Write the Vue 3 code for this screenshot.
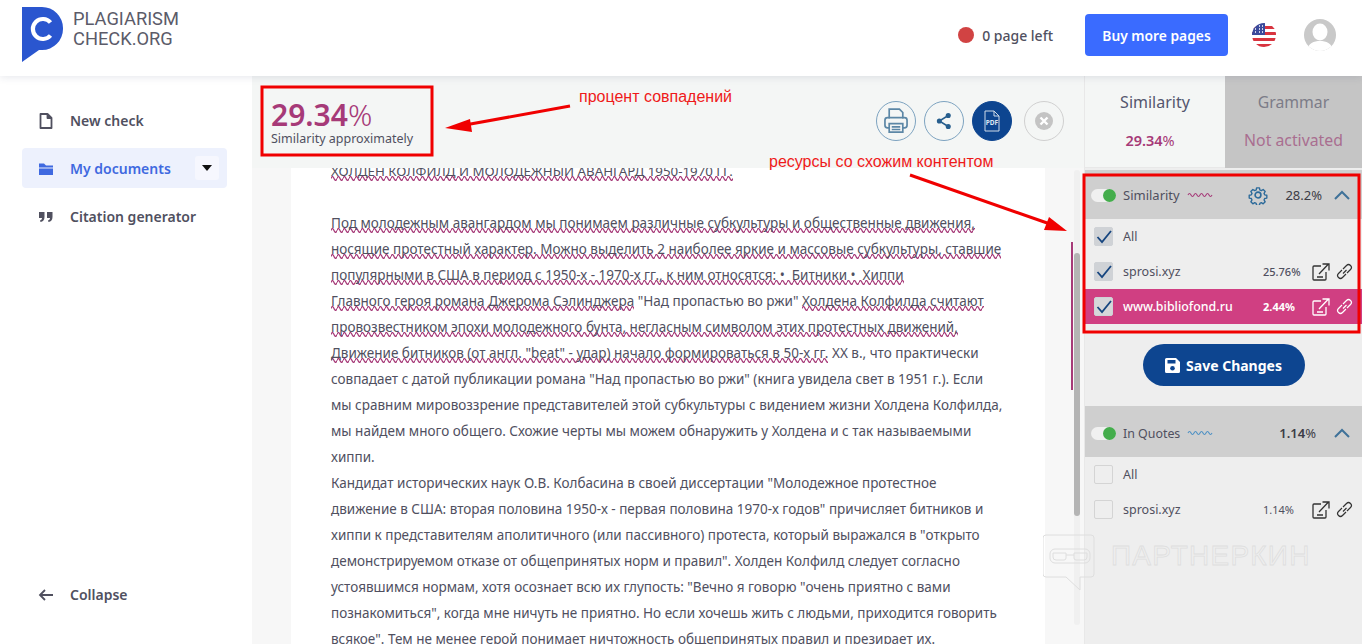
<script setup>
const W = (t) => ({ w: t })
const P = (t) => ({ t })
const lines = [
  [W('Под молодежным авангардом мы понимаем различные субкультуры и общественные движения,')],
  [W('носящие протестный характер. Можно выделить 2 наиболее яркие и массовые субкультуры, ставшие')],
  [W('популярными в США в период с 1950-х - 1970-х гг., к ним относятся: •  Битники •  Хиппи')],
  [W('Главного героя романа Джерома Сэлинджера'), P(' "Над пропастью во ржи" '), W('Холдена Колфилда считают')],
  [W('провозвестником эпохи молодежного бунта, негласным символом этих протестных движений,')],
  [W('Движение битников (от англ. "beat" - удар) начало формироваться в 50-х гг.'), P(' XX в., что практически')],
  [P('совпадает с датой публикации романа "Над пропастью во ржи" (книга увидела свет в 1951 г.). Если')],
  [P('мы сравним мировоззрение представителей этой субкультуры с видением жизни Холдена Колфилда,')],
  [P('мы найдем много общего. Схожие черты мы можем обнаружить у Холдена и с так называемыми')],
  [P('хиппи.')],
  [P('Кандидат исторических наук О.В. Колбасина в своей диссертации "Молодежное протестное')],
  [P('движение в США: вторая половина 1950-х - первая половина 1970-х годов" причисляет битников и')],
  [P('хиппи к представителям аполитичного (или пассивного) протеста, который выражался в "открыто')],
  [P('демонстрируемом отказе от общепринятых норм и правил". Холден Колфилд следует согласно')],
  [P('устоявшимся нормам, хотя осознает всю их глупость: "Вечно я говорю "очень приятно с вами')],
  [P('познакомиться", когда мне ничуть не приятно. Но если хочешь жить с людьми, приходится говорить')],
  [P('всякое". Тем не менее герой понимает ничтожность общепринятых правил и презирает их.')],
]
const nav = [
  { label: 'New check', icon: 'file' },
  { label: 'My documents', icon: 'folder', active: true },
  { label: 'Citation generator', icon: 'quote' },
]
const wave = 'M0 4q1.500-3 3 0t3 0 3 0 3 0 3 0 3 0 3 0 3 0'
</script>

<template>
  <div class="app">
    <header class="top">
      <div class="logo">
        <svg width="42" height="56" viewBox="0 0 42 56">
          <path d="M0 0h20a21 21 0 0 1 21 21v1a21 21 0 0 1-21 21h-3L0 55z" fill="#2a56cf" />
          <path d="M28.500 15.500a10 10 0 1 0 0 13" fill="none" stroke="#fff" stroke-width="4.200" />
        </svg>
        <div class="logo-text">PLAGIARISM<br />CHECK.ORG</div>
      </div>
      <div class="top-right">
        <span class="dot"></span>
        <span class="pages">0 page left</span>
        <button class="buy">Buy more pages</button>
        <svg class="flag" width="24" height="24" viewBox="0 0 24 24">
          <defs><clipPath id="fc"><circle cx="12" cy="12" r="12" /></clipPath></defs>
          <g clip-path="url(#fc)">
            <rect width="24" height="24" fill="#fff" />
            <rect y="3" width="24" height="3" fill="#d8343f" />
            <rect y="9" width="24" height="3" fill="#d8343f" />
            <rect y="15" width="24" height="3" fill="#d8343f" />
            <rect y="21" width="24" height="3" fill="#d8343f" />
            <rect width="13" height="12" fill="#3b4a9c" />
            <path d="M3 3h1M7 3h1M10 3h1M3 6h1M7 6h1M10 6h1M3 9h1M7 9h1M10 9h1" stroke="#fff" stroke-width="1.400" />
          </g>
        </svg>
        <svg class="avatar" width="32" height="32" viewBox="0 0 32 32">
          <defs><clipPath id="ac"><circle cx="16" cy="16" r="16" /></clipPath></defs>
          <g clip-path="url(#ac)">
            <rect width="32" height="32" fill="#c9c9c9" />
            <ellipse cx="16" cy="13" rx="7.500" ry="8.500" fill="#fff" />
            <path d="M3 32c1-8 7-10 13-10s12 2 13 10z" fill="#fff" />
          </g>
        </svg>
      </div>
    </header>

    <div class="body">
      <aside class="side">
        <nav class="nav">
          <a v-for="n in nav" :key="n.label" class="nav-item" :class="{ active: n.active }">
            <svg width="16" height="16" viewBox="0 0 16 16" class="nav-ico">
              <path v-if="n.icon === 'file'" d="M2.500 1h7l4 4v10h-11zM9.500 1v4h4" fill="none" stroke="currentColor" stroke-width="1.800" stroke-linejoin="round" />
              <path v-else-if="n.icon === 'folder'" d="M1 2.500h5l2 2h7v2H1zM1 7.500h14V14H1z" fill="currentColor" />
              <path v-else d="M1 3h5.500v5c0 3-1.500 4.500-4 5l-.5-1.500c1.500-.5 2-1.500 2-2.500H1zM9 3h5.500v5c0 3-1.500 4.500-4 5l-.5-1.500c1.500-.5 2-1.500 2-2.500H9z" fill="currentColor" />
            </svg>
            <span>{{ n.label }}</span>
            <span v-if="n.active" class="caret"><i></i></span>
          </a>
        </nav>
        <a class="nav-item collapse">
          <svg width="16" height="16" viewBox="0 0 16 16" class="nav-ico">
            <path d="M15 8H2M7 3 2 8l5 5" fill="none" stroke="currentColor" stroke-width="1.800" />
          </svg>
          <span>Collapse</span>
        </a>
      </aside>

      <main class="center">
        <div class="toolbar">
          <div class="score">
            <div class="num">29.34<span>%</span></div>
            <div class="cap">Similarity approximately</div>
          </div>
          <div class="tools">
            <span class="round">
              <svg width="30" height="32" viewBox="0 0 30 32" fill="none" stroke="#5c87a6" stroke-width="2">
                <path d="M7 13V2h12l4 4v7" />
                <rect x="2" y="12" width="26" height="12" rx="3" />
                <path d="M7 19h16v10H7z" fill="#f4f6f5" />
                <path d="M10 23h10M10 26h10" />
              </svg>
            </span>
            <span class="round">
              <svg width="18" height="20" viewBox="0 0 18 20" fill="#285f8e">
                <circle cx="14" cy="3.500" r="3" />
                <circle cx="3.500" cy="10" r="3" />
                <circle cx="14" cy="16.500" r="3" />
                <path d="M14 3.500 3.500 10 14 16.500" fill="none" stroke="#285f8e" stroke-width="1.800" />
              </svg>
            </span>
            <span class="round pdf">
              <svg width="16" height="22" viewBox="0 0 16 22" fill="none" stroke="#cfdbe8" stroke-width="1">
                <path d="M1 1h9l5 5v15H1zM10 1v5h5" />
                <text x="8" y="15" text-anchor="middle" class="pdf-t">PDF</text>
              </svg>
            </span>
            <span class="round off">
              <svg width="18" height="18" viewBox="0 0 18 18">
                <circle cx="9" cy="9" r="9" fill="#c4c4c4" />
                <path d="m5.500 5.500 7 7m0-7-7 7" stroke="#fff" stroke-width="2.400" />
              </svg>
            </span>
          </div>
        </div>
        <div class="doc-wrap">
          <article class="paper">
            <div class="doc">
              <p class="line title"><span class="w">ХОЛДЕН КОЛФИЛД И МОЛОДЕЖНЫЙ АВАНГАРД 1950-1970 ГГ.</span></p>
              <p class="line">&nbsp;</p>
              <p v-for="(l, i) in lines" :key="i" class="line">
                <template v-for="(s, j) in l" :key="j">
                  <span v-if="s.w" class="w">{{ s.w }}</span><span v-else>{{ s.t }}</span>
                </template>
              </p>
            </div>
          </article>
          <div class="track"><div class="thumb"></div></div>
          <div class="mark"></div>
        </div>
      </main>

      <aside class="panel">
        <div class="tabs">
          <div class="tab on">
            <div class="t1">Similarity</div>
            <div class="t2"><b>29.34</b>%</div>
          </div>
          <div class="tab off-tab">
            <div class="t1">Grammar</div>
            <div class="t3">Not activated</div>
          </div>
        </div>

        <section class="sec first">
          <div class="sec-head">
            <span class="toggle"><i></i></span>
            <span class="sec-name">Similarity</span>
            <svg class="wv" width="26" height="8" viewBox="0 0 24 8"><path :d="wave" fill="none" stroke="#a63a78" stroke-width="1.100" /></svg>
            <svg class="gear" width="20" height="20" viewBox="0 0 24 24" fill="none" stroke="#2c6a9a" stroke-width="1.900" stroke-linejoin="round">
              <circle cx="12" cy="12" r="3.500" />
              <path d="M10 2h4l.6 3 2 .9 2.600-1.600 2.800 2.800-1.600 2.600.9 2 3 .6v4l-3 .6-.9 2 1.600 2.600-2.800 2.800-2.600-1.600-2 .9-.6 3h-4l-.6-3-2-.9-2.600 1.600-2.800-2.800 1.600-2.600-.9-2-3-.6v-4l3-.6.9-2-1.600-2.600 2.800-2.800 2.600 1.600 2-.9z" transform="translate(1.700 1.700) scale(.86)" />
            </svg>
            <span class="sec-pct">28.2%</span>
            <svg class="chev" width="16" height="10" viewBox="0 0 16 10"><path d="M1 9 8 2l7 7" fill="none" stroke="#3f7299" stroke-width="2" /></svg>
          </div>
          <label class="row"><span class="cb on"><svg width="16" height="14" viewBox="0 0 16 14"><path d="m1.500 7 4.500 5 9-11" fill="none" stroke="#16457f" stroke-width="1.800" /></svg></span><span class="name">All</span></label>
          <label class="row"><span class="cb on"><svg width="16" height="14" viewBox="0 0 16 14"><path d="m1.500 7 4.500 5 9-11" fill="none" stroke="#16457f" stroke-width="1.800" /></svg></span><span class="name">sprosi.xyz</span><span class="pct">25.76%</span>
            <svg class="ext" width="18" height="18" viewBox="0 0 18 18" fill="none" stroke="currentColor" stroke-width="1.300"><path d="M9 3H2a1 1 0 0 0-1 1v12a1 1 0 0 0 1 1h11a1 1 0 0 0 1-1V9M7 11 16 1.500M10.500 1H17v6.500M5 14h6" /></svg>
            <svg class="lnk" width="17" height="17" viewBox="0 0 17 17" fill="none" stroke="currentColor" stroke-width="1.200"><path d="M7 10.500 10.500 7M6 7 2.500 10.500a2.800 2.800 0 0 0 4 4L10 11M11 10l3.500-3.500a2.800 2.800 0 0 0-4-4L7 6" /></svg>
          </label>
          <label class="row hot"><span class="cb on"><svg width="16" height="14" viewBox="0 0 16 14"><path d="m1.500 7 4.500 5 9-11" fill="none" stroke="#16457f" stroke-width="1.800" /></svg></span><span class="name">www.bibliofond.ru</span><span class="pct">2.44%</span>
            <svg class="ext" width="18" height="18" viewBox="0 0 18 18" fill="none" stroke="currentColor" stroke-width="1.300"><path d="M9 3H2a1 1 0 0 0-1 1v12a1 1 0 0 0 1 1h11a1 1 0 0 0 1-1V9M7 11 16 1.500M10.500 1H17v6.500M5 14h6" /></svg>
            <svg class="lnk" width="17" height="17" viewBox="0 0 17 17" fill="none" stroke="currentColor" stroke-width="1.200"><path d="M7 10.500 10.500 7M6 7 2.500 10.500a2.800 2.800 0 0 0 4 4L10 11M11 10l3.500-3.500a2.800 2.800 0 0 0-4-4L7 6" /></svg>
          </label>
          <div class="save-wrap">
            <button class="save">
              <svg width="15" height="15" viewBox="0 0 15 15"><path d="M1.500 0H11l4 4v9.500a1.500 1.500 0 0 1-1.500 1.500h-12A1.500 1.500 0 0 1 0 13.500v-12A1.500 1.500 0 0 1 1.500 0z" fill="#fff" /><rect x="2.500" y="2" width="8" height="3.500" fill="#0d4590" /><circle cx="7.500" cy="10.300" r="2.300" fill="#0d4590" /></svg>
              Save Changes
            </button>
          </div>
        </section>

        <section class="sec">
          <div class="sec-head q">
            <span class="toggle"><i></i></span>
            <span class="sec-name">In Quotes</span>
            <svg class="wv" width="26" height="8" viewBox="0 0 24 8"><path :d="wave" fill="none" stroke="#4d90c4" stroke-width="1.100" /></svg>
            <span class="sec-pct solo"><b>1.14</b>%</span>
            <svg class="chev" width="16" height="10" viewBox="0 0 16 10"><path d="M1 9 8 2l7 7" fill="none" stroke="#3f7299" stroke-width="2" /></svg>
          </div>
          <label class="row"><span class="cb"></span><span class="name">All</span></label>
          <label class="row"><span class="cb"></span><span class="name">sprosi.xyz</span><span class="pct q2">1.14%</span>
            <svg class="ext" width="18" height="18" viewBox="0 0 18 18" fill="none" stroke="currentColor" stroke-width="1.300"><path d="M9 3H2a1 1 0 0 0-1 1v12a1 1 0 0 0 1 1h11a1 1 0 0 0 1-1V9M7 11 16 1.500M10.500 1H17v6.500M5 14h6" /></svg>
            <svg class="lnk" width="17" height="17" viewBox="0 0 17 17" fill="none" stroke="currentColor" stroke-width="1.200"><path d="M7 10.500 10.500 7M6 7 2.500 10.500a2.800 2.800 0 0 0 4 4L10 11M11 10l3.500-3.500a2.800 2.800 0 0 0-4-4L7 6" /></svg>
          </label>
        </section>
      </aside>
    </div>

    <!-- annotations drawn on top of the screenshot -->
    <svg class="notes" width="1362" height="644" viewBox="0 0 1362 644" fill="none">
      <rect x="262" y="87" width="170" height="68" stroke="#f00000" stroke-width="3" />
      <rect x="1084" y="175" width="275" height="157" stroke="#f00000" stroke-width="3" />
      <path d="M570 106 465 125" stroke="#f00000" stroke-width="3" />
      <path d="m445 128 25-9 2 13z" fill="#f00000" />
      <path d="M910 175 1050 224" stroke="#f00000" stroke-width="3" />
      <path d="m1067 231-23-1 5-13z" fill="#f00000" />
    </svg>
    <div class="note n1">процент совпадений</div>
    <div class="note n2">ресурсы со схожим контентом</div>

    <div class="wm">
      <svg width="54" height="60" viewBox="0 0 54 60" fill="none" stroke="#dedede" stroke-width="1">
        <path d="M3 1h45a3 3 0 0 1 3 3v36a3 3 0 0 1-3 3H37v13L23 43H3a3 3 0 0 1-3-3V4a3 3 0 0 1 3-3z" />
        <rect x="7" y="15" width="40" height="14" rx="5" />
        <path d="M10 19h13v5a2 2 0 0 1-2 2H13a3 3 0 0 1-3-3zM31 19h13v4a3 3 0 0 1-3 3h-8a2 2 0 0 1-2-2zM23 21h8" />
      </svg>
      <span>ПАРТНЕРКИН</span>
    </div>
  </div>
</template>

<style>
html, body { margin: 0; overflow: hidden; background: #fff; }
</style>

<style scoped>
.app {
  position: relative;
  width: 1362px;
  height: 644px;
  overflow: hidden;
  font-family: "Noto Sans", "Open Sans", sans-serif;
  color: #50505f;
}
.top {
  position: relative;
  z-index: 2;
  height: 76px;
  background: #fff;
  box-shadow: 0 1px 8px rgba(40, 50, 90, .12);
  display: flex;
  align-items: flex-start;
  justify-content: space-between;
  padding-left: 22px;
  padding-right: 26px;
  box-sizing: border-box;
}
.logo { display: flex; gap: 9px; padding-top: 7px; }
.logo-text {
  font-family: Roboto, sans-serif;
  font-size: 18.300px;
  line-height: 20px;
  color: #5b5b69;
  padding-top: 2px;
}
.top-right { display: flex; align-items: center; height: 70px; }
.dot { width: 16px; height: 16px; border-radius: 50%; background: #d14343; margin-right: 8px; }
.pages { font-size: 14px; font-weight: 500; color: #50505f; margin-right: 32px; }
.buy {
  width: 143px;
  height: 42px;
  border: 0;
  border-radius: 4px;
  background: #3a6bff;
  color: #fff;
  font: 600 13.800px "Noto Sans", sans-serif;
  margin-right: 24px;
}
.flag { margin-right: 28px; }
.body { display: grid; grid-template-columns: 252px 1fr 277px; height: 568px; }
.side {
  display: flex;
  flex-direction: column;
  justify-content: space-between;
  padding: 24px 25px 38px 22px;
}
.nav { display: flex; flex-direction: column; gap: 8px; }
.nav-item {
  display: flex;
  align-items: center;
  height: 40px;
  box-sizing: border-box;
  padding-left: 16px;
  padding-top: 1px;
  border-radius: 4px;
  font-size: 14px;
  font-weight: 600;
  color: #50505f;
}
.nav-ico { margin-right: 16px; flex: none; }
.nav-item.active { background: #edf1fd; color: #3f69e0; }
.caret {
  margin-left: auto;
  margin-right: 8px;
  margin-top: -1px;
  width: 24px;
  height: 24px;
  background: #f6f7fe;
  border-radius: 3px;
  display: flex;
  align-items: center;
  justify-content: center;
}
.caret i { border: 5px solid transparent; border-top: 6px solid #111; border-bottom: 0; }
.center { display: flex; flex-direction: column; min-width: 0; border-right: 1px solid #e8e8e8; }
.toolbar {
  height: 92px;
  flex: none;
  background: #f4f6f5;
  display: flex;
  justify-content: space-between;
  padding: 0 20px 0 19px;
  position: relative;
  z-index: 1;
}
.score { padding-top: 23px; }
.num { font-size: 30px; line-height: 32px; font-weight: 600; color: #a63a78; }
.num span { font-weight: 300; }
.cap { font-size: 12.500px; line-height: 16px; color: #50505f; }
.tools { display: flex; gap: 8px; padding-top: 25px; }
.round {
  width: 38px;
  height: 38px;
  border: 1px solid #7da3c0;
  border-radius: 50%;
  display: flex;
  align-items: center;
  justify-content: center;
}
.round svg { transform: scale(.85); }
.round.pdf { background: #0d4590; border-color: #0d4590; }
.round.pdf svg { transform: none; }
.round.off { border-color: #d0d0d0; margin-left: 4px; }
.round.off svg { transform: none; }
.pdf-t { font: 700 6.500px "Noto Sans", sans-serif; fill: #dfe8f2; stroke: none; }
.doc-wrap {
  flex: 1;
  position: relative;
  background: #f7f7f7;
  overflow: hidden;
  padding-left: 39px;
}
.paper { width: 754px; height: 100%; background: #fff; overflow: hidden; }
.doc { margin-top: -10px; padding-left: 40px; }
.line {
  margin: 0;
  height: 26px;
  line-height: 26px;
  white-space: pre;
  font-size: 13.500px;
  color: #50505f;
}
.title { font-size: 13.300px; }
.w {
  padding-bottom: 1px;
  background: url("data:image/svg+xml,%3Csvg xmlns='http://www.w3.org/2000/svg' width='6' height='5'%3E%3Cpath d='M0 2.500q1.500-3.800 3 0t3 0' fill='none' stroke='%23a63a78' stroke-width='1.300'/%3E%3C/svg%3E") repeat-x 0 100%;
}
.track {
  position: absolute;
  left: 822px;
  top: 2px;
  width: 6px;
  height: 455px;
  background: #f0f0f0;
  border-radius: 3px;
}
.thumb {
  position: absolute;
  top: 83px;
  left: 0;
  width: 100%;
  height: 263px;
  background: #b4b4b4;
  border-radius: 3px;
}
.mark { position: absolute; left: 819px; top: 74px; width: 2px; height: 148px; background: #a63a78; }
.panel { background: #eeeeee; min-width: 0; }
.tabs { display: grid; grid-template-columns: 140px 137px; height: 92px; }
.tab { text-align: center; }
.tab.on { background: #f4f6f5; border-bottom: 1px solid #e8e8e8; box-sizing: border-box; }
.off-tab { background: #c5c5c5; }
.t1 { font-size: 16px; line-height: 22px; padding-top: 15px; color: #55566e; }
.off-tab .t1 { font-size: 15.800px; color: #7c7c88; }
.t2 { font-size: 14.500px; line-height: 20px; margin-top: 17px; padding-right: 10px; color: #a63a78; }
.t2 b { font-weight: 600; }
.t3 { font-size: 15.800px; line-height: 22px; margin-top: 16px; color: #a96e90; }
.sec.first { padding-top: 2px; }
.sec-head {
  height: 49px;
  box-sizing: border-box;
  padding: 1px 12px 0 6px;
  background: #cfcfcf;
  display: flex;
  align-items: center;
  font-size: 13px;
}
.sec-head.q { height: 51px; padding-top: 3px; }
.sec-head.q .sec-name { font-size: 12.400px; }
.toggle {
  width: 25px;
  height: 13px;
  border-radius: 7px;
  background: #f0f0f0;
  position: relative;
  margin-right: 7px;
}
.toggle i {
  position: absolute;
  right: 0;
  top: 0;
  width: 13px;
  height: 13px;
  border-radius: 50%;
  background: #44ad4c;
}
.sec-name { color: #50505f; }
.wv { margin-left: 7px; }
.gear { margin-left: auto; margin-right: 17px; }
.sec-pct { margin-right: 12px; color: #3c3c46; font-size: 13px; }
.sec-pct.solo { margin-left: auto; margin-right: 18px; }
.sec-pct b { font-weight: 600; }
.row {
  height: 35px;
  display: flex;
  align-items: center;
  padding-left: 9px;
  padding-right: 9px;
  font-size: 12.500px;
  color: #50505f;
}
.cb {
  width: 19px;
  height: 19px;
  box-sizing: border-box;
  border: 1px solid #d4d4d4;
  border-radius: 2px;
  margin-right: 10px;
  flex: none;
  display: flex;
  align-items: center;
  justify-content: center;
}
.cb.on { background: #cfd2d6; border-color: #cfd2d6; }
.pct { margin-left: auto; font-size: 11px; font-weight: 500; margin-right: 11px; width: 38px; text-align: left; color: #50505f; }
.pct.q2 { font-weight: 400; }
.ext { margin-right: 6px; color: #333; flex: none; }
.lnk { color: #333; flex: none; }
.row.hot { background: #d03f82; color: #fff; }
.row.hot .cb.on { background: #d6d6d9; }
.row.hot .name { font-weight: 500; font-size: 12.400px; }
.row.hot .pct { font-weight: 700; color: #fff; }
.row.hot .ext, .row.hot .lnk { color: #fff; }
.save-wrap { display: flex; justify-content: center; padding: 20px 0; }
.save {
  width: 162px;
  height: 42px;
  border: 0;
  border-radius: 21px;
  background: #0d4590;
  color: #fff;
  font: 700 14px "Noto Sans", sans-serif;
  display: flex;
  align-items: center;
  justify-content: center;
  gap: 6px;
}
.notes { position: absolute; left: 0; top: 0; pointer-events: none; z-index: 3; }
.note {
  position: absolute;
  z-index: 3;
  font-family: "Liberation Sans", Arial, sans-serif;
  font-size: 16px;
  color: #ef1a1a;
  white-space: nowrap;
}
.n1 { left: 579px; top: 88px; }
.n2 { left: 769px; top: 153px; }
.wm {
  position: absolute;
  z-index: 3;
  left: 1043px;
  top: 534px;
  display: flex;
  gap: 14px;
  pointer-events: none;
}
.wm span {
  font-family: "Liberation Sans", sans-serif;
  font-size: 28px;
  line-height: 40px;
  margin-top: 2px;
  letter-spacing: 1.200px;
  color: transparent;
  -webkit-text-stroke: 0.8px #dedede;
}
</style>
